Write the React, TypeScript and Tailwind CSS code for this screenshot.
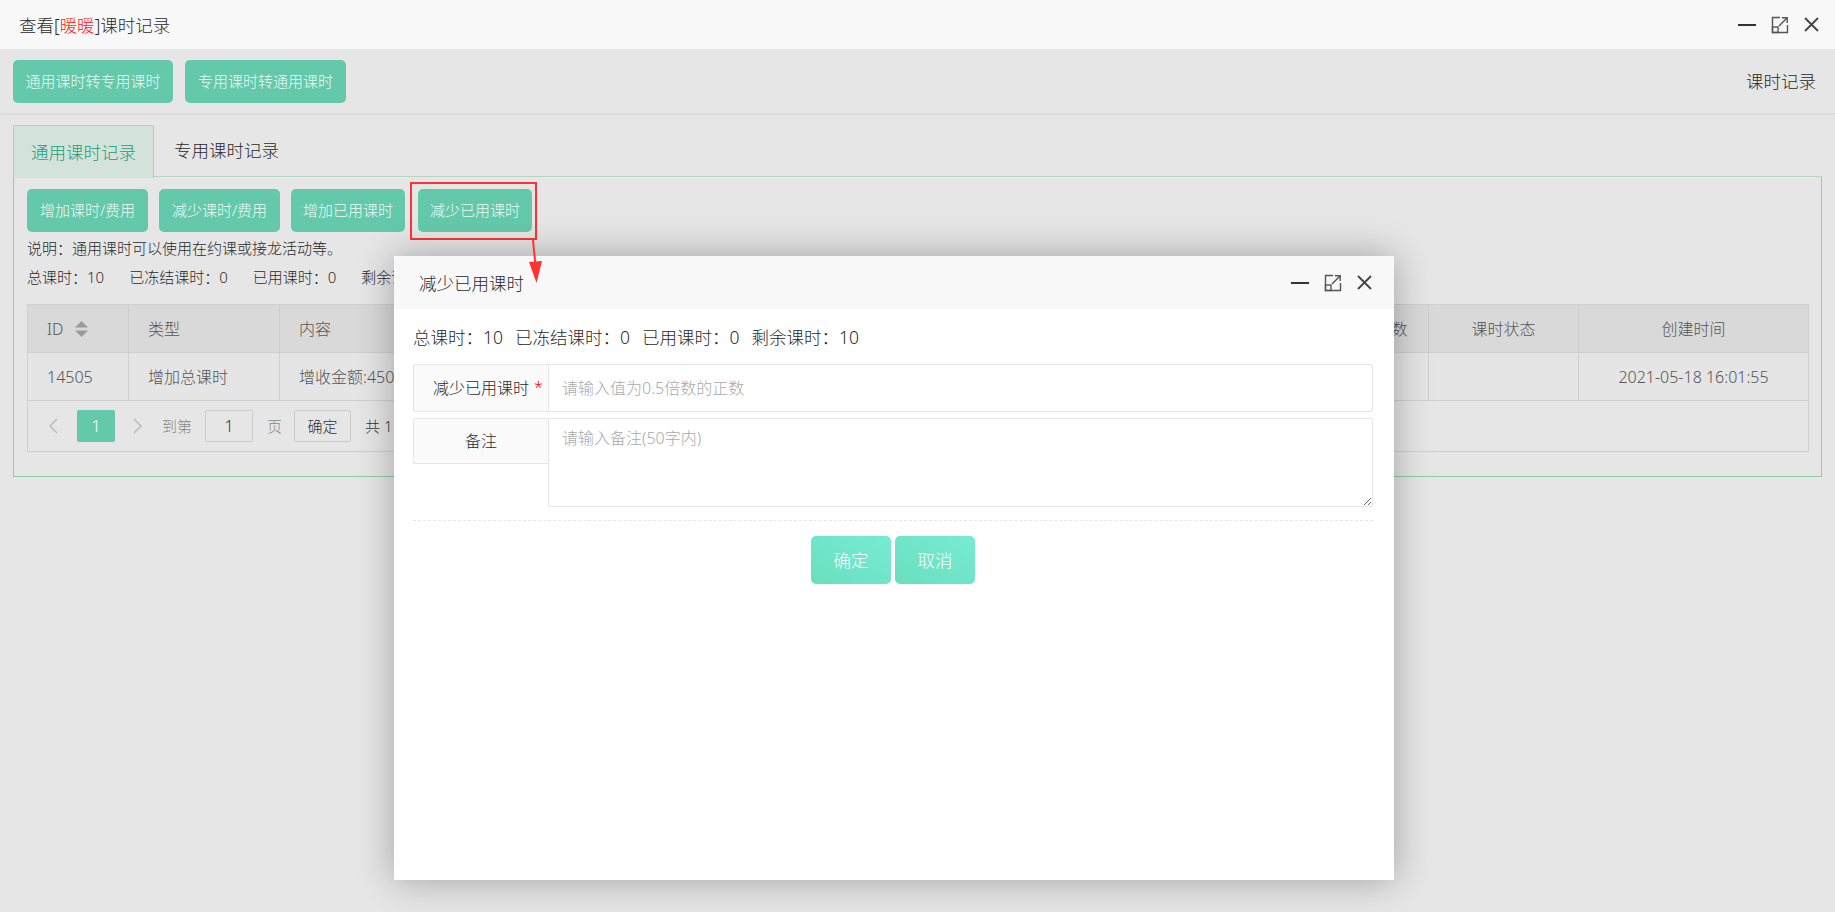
import React from "react";

const FONT = "font-['Noto_Sans','Noto_Sans_CJK_SC',sans-serif]";

function MinIcon() {
  return (
    <svg width="18" height="18" viewBox="0 0 18 18">
      <line x1="0" y1="9" x2="18" y2="9" stroke="#333" strokeWidth="2" />
    </svg>
  );
}
function MaxIcon() {
  return (
    <svg width="18" height="18" viewBox="0 0 18 18" fill="none" stroke="#555" strokeWidth="1.4">
      <path d="M9 1.5H1.5V16.5H16.5V9" />
      <rect x="1.5" y="11" width="5.5" height="5.5" />
      <path d="M8 10L16 2" />
      <path d="M11 1.8H16.2V7" />
    </svg>
  );
}
function CloseIcon() {
  return (
    <svg width="15" height="15" viewBox="0 0 15 15" fill="none" stroke="#444" strokeWidth="1.8">
      <path d="M1 1L14 14M14 1L1 14" />
    </svg>
  );
}

function GreenBtn({ children, w }: { children: React.ReactNode; w: string }) {
  return (
    <div className={`${w} h-[43px] rounded-[5px] bg-[#64c9aa] text-[#eef9f5] text-[15px] leading-[43px] text-center`}>
      {children}
    </div>
  );
}

function SortIcon() {
  return (
    <svg width="13" height="16" viewBox="0 0 13 16" fill="#9a9a9a">
      <path d="M6.5 0L13 6.5H0Z" />
      <path d="M6.5 16L13 9.5H0Z" />
    </svg>
  );
}

export default function App() {
  return (
    <div className={`relative w-[1835px] h-[912px] overflow-hidden bg-[#e6e6e6] ${FONT} font-light text-[#2a2a2a]`}>
      {/* title bar */}
      <div className="h-[49px] bg-[#f8f8f8] flex items-center justify-between pl-[19px] pr-[16px]">
        <div className="text-[17.5px] leading-[24px] text-[#2a2a2a]">
          查看[<span className="text-[#ff2020]">暖暖</span>]课时记录
        </div>
        <div className="flex items-center gap-[15px]">
          <MinIcon />
          <MaxIcon />
          <CloseIcon />
        </div>
      </div>

      {/* toolbar */}
      <div className="h-[65px] flex items-center justify-between pl-[13px] pr-[19px] border-b border-[#dadada] shadow-[0_1px_2px_rgba(0,0,0,0.04)]">
        <div className="flex gap-[12px]">
          <GreenBtn w="w-[160px]">通用课时转专用课时</GreenBtn>
          <GreenBtn w="w-[161px]">专用课时转通用课时</GreenBtn>
        </div>
        <div className="text-[17.5px] leading-[24px] text-[#2a2a2a]">课时记录</div>
      </div>

      {/* tabs + panel */}
      <div className="px-[13px] pt-[11px]">
        <div className="flex h-[52px] border-b border-[#b5d8c2]">
          <div className="w-[141px] h-[53px] -mb-px bg-[#d4e3d9] border border-b-0 border-[#a9d3b9] rounded-t-[2px] flex items-center justify-center text-[17.5px] text-[#1b9c85]">
            通用课时记录
          </div>
          <div className="pl-[20px] flex items-center text-[17.5px] text-[#2a2a2a]">专用课时记录</div>
        </div>
        <div className="h-[300px] border border-t-0 border-[#8fcfa4] pl-[13px] pr-[12px] pt-[12px]">
          <div className="flex gap-[11px]">
            <GreenBtn w="w-[121px]">增加课时/费用</GreenBtn>
            <GreenBtn w="w-[121px]">减少课时/费用</GreenBtn>
            <GreenBtn w="w-[114px]">增加已用课时</GreenBtn>
            <div className="ml-[2px]">
              <GreenBtn w="w-[114px]">减少已用课时</GreenBtn>
            </div>
          </div>
          <div className="mt-[5px] text-[15px] leading-[22px] text-[#2a2a2a]">说明：通用课时可以使用在约课或接龙活动等。</div>
          <div className="mt-[7px] flex gap-[25px] text-[15px] leading-[22px] text-[#2a2a2a]">
            <span>总课时：10</span>
            <span>已冻结课时：0</span>
            <span>已用课时：0</span>
            <span>剩余课时：10</span>
          </div>

          {/* table */}
          <div className="mt-[16px] border border-[#cfcfcf] text-[16px] text-[#555]">
            <div className="grid grid-cols-[101px_151px_1fr_240px_90px_150px_229px] h-[48px] bg-[#d9d9d9] border-b border-[#cfcfcf]">
              <div className="flex items-center gap-[12px] pl-[19px] border-r border-[#cfcfcf]">
                <span>ID</span>
                <SortIcon />
              </div>
              <div className="flex items-center pl-[19px] border-r border-[#cfcfcf]">类型</div>
              <div className="flex items-center pl-[19px] border-r border-[#cfcfcf]">内容</div>
              <div className="flex items-center pl-[19px] border-r border-[#cfcfcf]">操作人</div>
              <div className="flex items-center justify-center border-r border-[#cfcfcf]">课时数</div>
              <div className="flex items-center justify-center border-r border-[#cfcfcf]">课时状态</div>
              <div className="flex items-center justify-center">创建时间</div>
            </div>
            <div className="grid grid-cols-[101px_151px_1fr_240px_90px_150px_229px] h-[48px] bg-[#e5e5e5] border-b border-[#cfcfcf]">
              <div className="flex items-center pl-[19px] border-r border-[#cfcfcf]">14505</div>
              <div className="flex items-center pl-[19px] border-r border-[#cfcfcf]">增加总课时</div>
              <div className="flex items-center pl-[19px] border-r border-[#cfcfcf]">增收金额:4500.00元，增加课时:10</div>
              <div className="flex items-center pl-[19px] border-r border-[#cfcfcf]">管理员</div>
              <div className="flex items-center justify-center border-r border-[#cfcfcf]">10</div>
              <div className="flex items-center justify-center border-r border-[#cfcfcf]"></div>
              <div className="flex items-center justify-center">2021-05-18 16:01:55</div>
            </div>
            <div className="h-[50px] flex items-center pl-[20px] text-[15px]">
              <svg width="10" height="16" viewBox="0 0 10 16" fill="none" stroke="#bbb" strokeWidth="1.5">
                <path d="M9 1L2 8L9 15" />
              </svg>
              <div className="ml-[19px] w-[38px] h-[32px] rounded-[2px] bg-[#64c9aa] text-white text-[16px] flex items-center justify-center">1</div>
              <svg className="ml-[18px]" width="10" height="16" viewBox="0 0 10 16" fill="none" stroke="#bbb" strokeWidth="1.5">
                <path d="M1 1L8 8L1 15" />
              </svg>
              <span className="ml-[19px] text-[#888]">到第</span>
              <div className="ml-[13px] w-[48px] h-[32px] border border-[#cccccc] rounded-[2px] flex items-center justify-center text-[16px] text-[#333]">1</div>
              <span className="ml-[14px] text-[#888]">页</span>
              <div className="ml-[12px] w-[57px] h-[32px] border border-[#cccccc] rounded-[2px] flex items-center justify-center text-[#333]">确定</div>
              <span className="ml-[14px] text-[#333]">共 1 条</span>
            </div>
          </div>
        </div>
      </div>

      {/* annotation box */}
      <div className="absolute left-[410px] top-[182px] w-[127px] h-[58px] border-2 border-[#f33]" />

      {/* modal */}
      <div className="absolute left-[394px] top-[256px] w-[1000px] h-[624px] bg-white shadow-[0_0_35px_rgba(0,0,0,0.3)]">
        <div className="h-[53px] bg-[#f8f8f8] flex items-center justify-between pl-[25px] pr-[22px]">
          <div className="text-[17.5px] leading-[24px] text-[#2a2a2a]">减少已用课时</div>
          <div className="flex items-center gap-[15px]">
            <MinIcon />
            <MaxIcon />
            <CloseIcon />
          </div>
        </div>
        <div className="pl-[19px] pr-[21px]">
          <div className="pt-[17px] flex gap-[12px] text-[17.5px] leading-[22px] text-[#2a2a2a]">
            <span>总课时：10</span>
            <span>已冻结课时：0</span>
            <span>已用课时：0</span>
            <span>剩余课时：10</span>
          </div>
          <div className="mt-[16px] flex h-[48px] border border-[#e6e6e6] rounded-[2px]">
            <div className="relative w-[135px] shrink-0 bg-[#fafafa] border-r border-[#e6e6e6] flex items-center justify-center text-[16px] text-[#2a2a2a]">
              <span className="relative">
                减少已用课时
                <span className="absolute left-[101px] top-[-1px] text-[#f00]">*</span>
              </span>
            </div>
            <input
              className="flex-1 min-w-0 px-[13px] text-[16px] text-[#333] outline-none placeholder:text-[#aaa] bg-white"
              placeholder="请输入值为0.5倍数的正数"
            />
          </div>
          <div className="mt-[6px] flex">
            <div className="w-[136px] h-[46px] shrink-0 bg-[#fafafa] border border-[#e6e6e6] rounded-l-[2px] flex items-center justify-center text-[16px] text-[#2a2a2a]">
              备注
            </div>
            <textarea
              className="flex-1 h-[89px] border border-[#e6e6e6] rounded-[2px] px-[13px] pt-[7px] pb-[9px] text-[16px] leading-[24px] outline-none placeholder:text-[#aaa] -ml-px"
              placeholder="请输入备注(50字内)"
            />
          </div>
          <div className="mt-[13px] border-t border-dashed border-[#e6e6e6]" />
          <div className="mt-[15px] flex justify-center gap-[4px]">
            <div className="w-[80px] h-[48px] rounded-[5px] bg-gradient-to-tr from-[#6adebe] to-[#78ecd3] text-white text-[17.5px] flex items-center justify-center">确定</div>
            <div className="w-[80px] h-[48px] rounded-[5px] bg-gradient-to-tr from-[#6adebe] to-[#78ecd3] text-white text-[17.5px] flex items-center justify-center">取消</div>
          </div>
        </div>
      </div>

      {/* red arrow */}
      <svg className="absolute left-[522px] top-[238px]" width="26" height="48" viewBox="0 0 26 48">
        <line x1="11" y1="2" x2="13.5" y2="28" stroke="#f33" strokeWidth="2" />
        <path d="M7 24L20 23L14.5 45Z" fill="#f33" />
      </svg>
    </div>
  );
}
